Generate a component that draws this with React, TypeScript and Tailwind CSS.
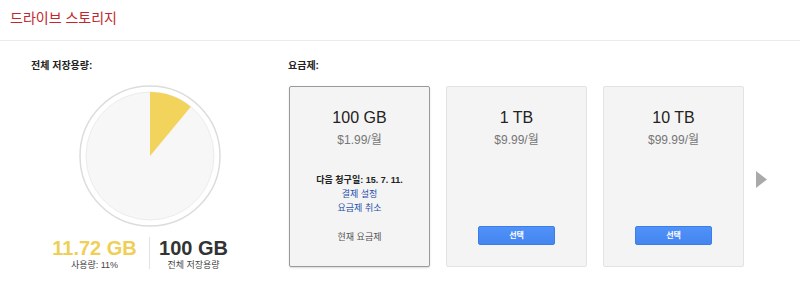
import React from "react";

const font = { fontFamily: '"Liberation Sans", "Noto Sans CJK KR", sans-serif' };

const Pie = () => {
    // 11% used, wedge from 12 o'clock clockwise
    const cx = 71, cy = 71, r = 64;
    const a = 0.11 * 2 * Math.PI;
    const x = cx + r * Math.sin(a);
    const y = cy - r * Math.cos(a);
    return (
        <svg width="142" height="142" viewBox="0 0 142 142">
            <circle cx={cx} cy={cy} r="70" fill="#ffffff" stroke="#dcdcdc" strokeWidth="1.5" />
            <circle cx={cx} cy={cy} r={r} fill="#f7f7f7" stroke="#ececec" strokeWidth="1" />
            <path d={`M${cx} ${cy} L${cx} ${cy - r} A${r} ${r} 0 0 1 ${x} ${y} Z`} fill="#f2d35b" />
        </svg>
    );
};

const Plan = ({ size, price, current }: { size: string; price: string; current?: boolean }) => (
    <div
        className={`w-[141px] h-[181px] rounded-[2px] bg-[#f4f4f4] flex flex-col items-center border ${current ? "border-[#9a9a9a] shadow-[0_1px_2px_rgba(0,0,0,0.15)]" : "border-[#e3e3e3]"}`}
    >
        <div className="mt-[21px] text-[16px] leading-[20px] text-[#222]">{size}</div>
        <div className="mt-[4px] text-[12px] leading-[16px] text-[#777]">{price}</div>
        {current ? (
            <>
                <div className="mt-[26px] text-[9px] leading-[12px] font-bold text-[#222]">다음 청구일: 15. 7. 11.</div>
                <div className="mt-px text-[9px] leading-[14px] text-[#1f4eac]">결제 설정</div>
                <div className="text-[9px] leading-[14px] text-[#1f4eac]">요금제 취소</div>
                <div className="mt-[15px] text-[9px] leading-[14px] text-[#555]">현재 요금제</div>
            </>
        ) : (
            <button className="mt-auto mb-[21px] w-[77px] h-[19px] rounded-[2px] border border-[#3b7ee8] bg-gradient-to-b from-[#4f92f8] to-[#4585ef] text-white text-[8px] font-bold">
                선택
            </button>
        )}
    </div>
);

export default function App() {
    return (
        <div style={font} className="w-[800px] h-[283px] bg-white overflow-hidden">
            <div className="h-[41px] border-b border-[#ebebeb] flex items-center pl-[10px]">
                <span className="text-[14px] text-[#c0262b] -mt-[4px]">드라이브 스토리지</span>
            </div>
            <div className="flex pt-[19px]">
                <div className="ml-[31px] w-[238px] flex flex-col">
                    <div className="text-[10px] leading-[12px] font-bold text-[#222]">전체 저장용량:</div>
                    <div className="mt-[13px] ml-[48px]">
                        <Pie />
                    </div>
                    <div className="mt-[10px] ml-[9px] flex">
                        <div className="w-[109px] flex flex-col items-center">
                            <div className="text-[20px] leading-[22px] font-bold text-[#f0cf57]">11.72 GB</div>
                            <div className="text-[9px] leading-[12px] text-[#444]">사용량: 11%</div>
                        </div>
                        <div className="w-px h-[32px] bg-[#e2e2e2]" />
                        <div className="w-[87px] flex flex-col items-center">
                            <div className="text-[20px] leading-[22px] font-bold text-[#333]">100 GB</div>
                            <div className="text-[9px] leading-[12px] text-[#444]">전체 저장용량</div>
                        </div>
                    </div>
                </div>
                <div className="ml-[19px] flex flex-col">
                    <div className="text-[10px] leading-[12px] font-bold text-[#222]">요금제:</div>
                    <div className="mt-[14px] ml-px flex items-center gap-[16px]">
                        <Plan size="100 GB" price="$1.99/월" current />
                        <Plan size="1 TB" price="$9.99/월" />
                        <Plan size="10 TB" price="$99.99/월" />
                        <svg width="12" height="17" viewBox="0 0 12 17" className="-ml-[4px] mt-[5px]">
                            <path d="M0 0 L11 8.5 L0 17 Z" fill="#a9a9a9" />
                        </svg>
                    </div>
                </div>
            </div>
        </div>
    );
}
